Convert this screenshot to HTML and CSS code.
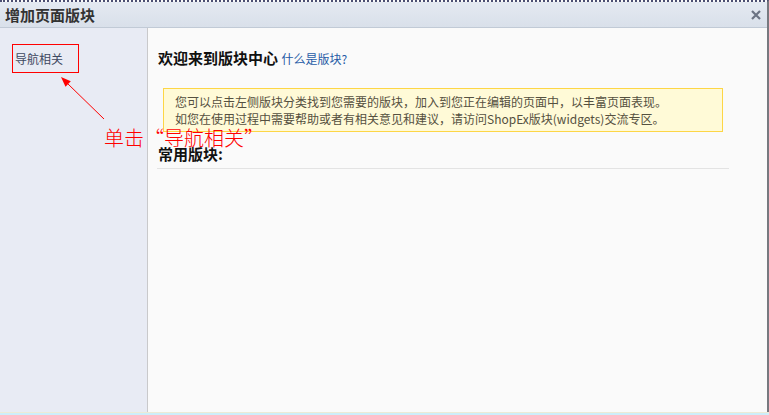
FILE: index.html
```html
<!DOCTYPE html>
<html lang="zh-CN">
<head>
    <meta charset="UTF-8">
    <title>增加页面版块</title>
    <link rel="stylesheet" href="styles.css">
</head>
<body>
    <div class="dialog">
        <div class="titlebar">
            <span class="title">增加页面版块</span>
            <svg class="close" width="10" height="10" viewBox="0 0 10 10">
                <path d="M1 1 L9 9 M9 1 L1 9" stroke="#6b7383" stroke-width="2.2" fill="none"/>
            </svg>
        </div>
        <div class="panes">
            <div class="sidebar">
                <div class="cat">导航相关</div>
            </div>
            <div class="main">
                <h2 class="welcome">欢迎来到版块中心 <a href="#" class="help">什么是版块?</a></h2>
                <div class="notice">
                    您可以点击左侧版块分类找到您需要的版块，加入到您正在编辑的页面中，以丰富页面表现。<br>
                    如您在使用过程中需要帮助或者有相关意见和建议，请访问ShopEx版块(widgets)交流专区。
                </div>
                <h3 class="common">常用版块:</h3>
            </div>
        </div>
    </div>
    <div class="taskbar"></div>

    <!-- annotation drawn over the screenshot -->
    <svg class="arrow" width="769" height="415" viewBox="0 0 769 415">
        <line x1="104" y1="119" x2="67" y2="83" stroke="#ff0000" stroke-width="1"/>
        <polygon points="61,77 70.8,81.3 65.5,86.7" fill="#ff0000"/>
    </svg>
    <div class="callout">单击“导航相关”</div>
</body>
</html>
```
FILE: styles.css
```css
body {
    margin: 0;
    width: 769px;
    height: 415px;
    overflow: hidden;
    position: relative;
    font-family: "Liberation Sans", "Noto Sans CJK SC", sans-serif;
    font-size: 12px;
    background: #fafafa;
}

.dialog {
    height: 410px;
    border-top: 2px dotted #4c4f72;
    border-right: 2px solid #77797f;
    display: flex;
    flex-direction: column;
}

.titlebar {
    height: 25px;
    flex: none;
    display: flex;
    align-items: center;
    justify-content: space-between;
    padding: 0 5px 0 5px;
    background: linear-gradient(#e4e9f1, #d9e0ea);
    border-bottom: 1px solid #c1cad6;
}

.title {
    font-family: "Noto Sans CJK SC", sans-serif;
    font-weight: bold;
    font-size: 15px;
    line-height: 20px;
    color: #333;
}

.close {
    margin-right: 1px;
}

.panes {
    flex: 1;
    display: flex;
    min-height: 0;
}

.sidebar {
    width: 147px;
    flex: none;
    background: #e8ebf4;
    border-right: 1px solid #c9c9cb;
    padding-top: 16px;
}

.cat {
    display: inline-block;
    margin-left: 12px;
    padding: 6px 15px 5px 2px;
    line-height: 16px;
    border: 1px solid #ff0000;
    color: #3e4860;
    font-family: "Noto Sans CJK SC", sans-serif;
}

.main {
    flex: 1;
    background: #fafafa;
    padding: 20px 0 0 10px;
}

.welcome {
    margin: 0;
    font-family: "Noto Sans CJK SC", sans-serif;
    font-size: 15px;
    line-height: 20px;
    color: #111;
}

.help {
    font-weight: normal;
    font-size: 12px;
    color: #1f5aa6;
    text-decoration: none;
}

.notice {
    width: 547px;
    margin: 19px 0 0 5px;
    padding: 4px 0 4px 11px;
    border: 1px solid #fdd646;
    background: #fffad7;
    color: #555040;
    line-height: 17px;
    font-family: "Noto Sans CJK SC", sans-serif;
}

.common {
    width: 571px;
    margin: 12px 0 0 -1px;
    padding: 0 0 4px 1px;
    border-bottom: 1px solid #e3e3e3;
    font-family: "Noto Sans CJK SC", sans-serif;
    font-size: 15px;
    line-height: 20px;
    color: #111;
}

.taskbar {
    height: 3px;
    border-top: 1px solid #ecebd6;
    background: #cdeefa;
    box-sizing: border-box;
}

.arrow {
    position: absolute;
    left: 0;
    top: 0;
    pointer-events: none;
}

.callout {
    position: absolute;
    left: 104px;
    top: 128px;
    font-family: "Noto Sans CJK SC", sans-serif;
    font-size: 20px;
    font-weight: 300;
    line-height: 20px;
    color: #ff0000;
    white-space: nowrap;
}
```
